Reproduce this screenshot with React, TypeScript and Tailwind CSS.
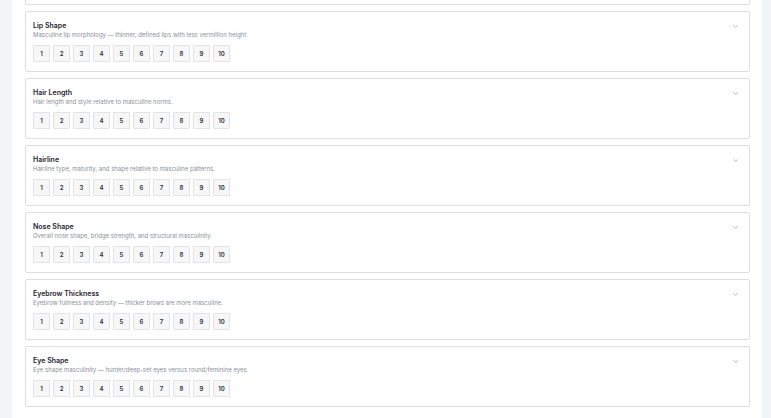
import React from "react";
import { ChevronDown } from "lucide-react";

interface Trait {
  title: string;
  description: string;
}

const TRAITS: Trait[] = [
  {
    title: "Lip Shape",
    description:
      "Masculine lip morphology — thinner, defined lips with less vermillion height.",
  },
  {
    title: "Hair Length",
    description: "Hair length and style relative to masculine norms.",
  },
  {
    title: "Hairline",
    description: "Hairline type, maturity, and shape relative to masculine patterns.",
  },
  {
    title: "Nose Shape",
    description: "Overall nose shape, bridge strength, and structural masculinity.",
  },
  {
    title: "Eyebrow Thickness",
    description: "Eyebrow fullness and density — thicker brows are more masculine.",
  },
  {
    title: "Eye Shape",
    description:
      "Eye shape masculinity — hunter/deep-set eyes versus round/feminine eyes.",
  },
];

const SCORES = [1, 2, 3, 4, 5, 6, 7, 8, 9, 10];

const TraitCard: React.FC<Trait> = ({ title, description }) => {
  return (
    <div className="relative h-[61px] shrink-0 rounded-[2px] border border-[#dedee2] bg-white px-[7px] pt-[9px]">
      <div className="text-[7px] leading-[10px] font-semibold text-[#1f2430]">
        {title}
      </div>
      <div className="text-[6px] leading-[8px] text-[#8a8f99]">
        {description}
      </div>
      <div className="mt-[6px] flex gap-[3px]">
        {SCORES.map((score) => (
          <button
            key={score}
            className="flex h-[17px] w-[17px] items-center justify-center rounded-[1px] border border-[#e2e3e7] bg-[#f7f7f8] text-[6px] font-semibold text-[#2a2e37]"
          >
            {score}
          </button>
        ))}
      </div>
      <ChevronDown
        size={7}
        strokeWidth={2}
        className="absolute right-[10px] top-[11px] text-[#7b7f8a]"
      />
    </div>
  );
};

export default function App() {
  return (
    <div
      className="flex h-[418px] w-[771px] overflow-hidden bg-[#f3f4f6]"
      style={{ fontFamily: "Inter, 'Noto Sans', sans-serif" }}
    >
      <div className="ml-[12px] h-full w-[750px] overflow-hidden bg-white pl-[13px] pr-[12px]">
        <div className="flex flex-col gap-[6px]">
          {/* tail of the card scrolled off above */}
          <div className="h-[5px] shrink-0 rounded-b-[2px] border-x border-b border-[#dedee2]" />
          {TRAITS.map((trait) => (
            <TraitCard key={trait.title} {...trait} />
          ))}
        </div>
      </div>
    </div>
  );
}
